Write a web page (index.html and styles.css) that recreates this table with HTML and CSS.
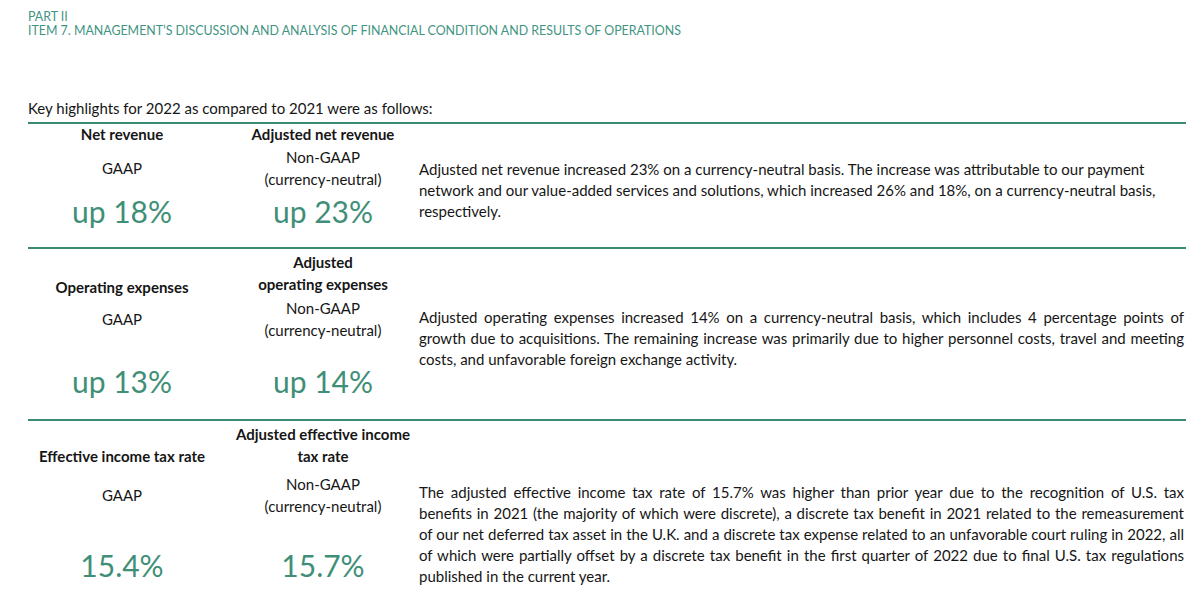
FILE: index.html
```html
<!DOCTYPE html>
<html lang="en">
<head>
<meta charset="utf-8">
<title>Key highlights</title>
<link rel="stylesheet" href="styles.css">
</head>
<body>
<main class="page">
  <header class="doc-head">
    <div class="doc-head__line">PART II</div>
    <div class="doc-head__line">ITEM 7. MANAGEMENT’S DISCUSSION AND ANALYSIS OF FINANCIAL CONDITION AND RESULTS OF OPERATIONS</div>
  </header>

  <p class="intro">Key highlights for 2022 as compared to 2021 were as follows:</p>

  <section class="hl hl--rev">
    <div class="hl__col">
      <div class="hl__title">Net revenue</div>
      <div class="hl__sub">GAAP</div>
      <div class="hl__value">up 18%</div>
    </div>
    <div class="hl__col hl__col--adj">
      <div class="hl__title">Adjusted net revenue</div>
      <div class="hl__sub">Non-GAAP<br>(currency-neutral)</div>
      <div class="hl__value">up 23%</div>
    </div>
    <p class="hl__desc hl__desc--left">Adjusted net revenue increased 23% on a currency-neutral basis. The increase was attributable to our payment network and our value-added services and solutions, which increased 26% and 18%, on a currency-neutral basis, respectively.</p>
  </section>

  <section class="hl hl--opex">
    <div class="hl__col">
      <div class="hl__title hl__title--low">Operating expenses</div>
      <div class="hl__sub">GAAP</div>
      <div class="hl__value">up 13%</div>
    </div>
    <div class="hl__col hl__col--adj">
      <div class="hl__title">Adjusted<br>operating expenses</div>
      <div class="hl__sub">Non-GAAP<br>(currency-neutral)</div>
      <div class="hl__value">up 14%</div>
    </div>
    <p class="hl__desc">Adjusted operating expenses increased 14% on a currency-neutral basis, which includes 4 percentage points of growth due to acquisitions. The remaining increase was primarily due to higher personnel costs, travel and meeting costs, and unfavorable foreign exchange activity.</p>
  </section>

  <section class="hl hl--tax">
    <div class="hl__col">
      <div class="hl__title">Effective income tax rate</div>
      <div class="hl__sub">GAAP</div>
      <div class="hl__value">15.4%</div>
    </div>
    <div class="hl__col hl__col--adj">
      <div class="hl__title">Adjusted effective income<br>tax rate</div>
      <div class="hl__sub">Non-GAAP<br>(currency-neutral)</div>
      <div class="hl__value">15.7%</div>
    </div>
    <p class="hl__desc">The adjusted effective income tax rate of 15.7% was higher than prior year due to the recognition of U.S. tax benefits in 2021 (the majority of which were discrete), a discrete tax benefit in 2021 related to the remeasurement of our net deferred tax asset in the U.K. and a discrete tax expense related to an unfavorable court ruling in 2022, all of which were partially offset by a discrete tax benefit in the first quarter of 2022 due to final U.S. tax regulations published in the current year.</p>
  </section>
</main>
</body>
</html>
```

FILE: styles.css
```css
* { box-sizing: border-box; }

body {
  margin: 0;
  background: #ffffff;
  color: #161616;
  font-family: Lato, "Liberation Sans", Arial, sans-serif;
}

.page {
  width: 1186px;
  padding-left: 28px;
}

.doc-head {
  padding-top: 10px;
  color: #3f9482;
  font-size: 12.4px;
  line-height: 13.5px;
}

.intro {
  margin: 61px 0 4px;
  font-size: 15px;
  line-height: 20px;
}

.hl {
  display: grid;
  grid-template-columns: 188px 202px 1fr;
  border-top: 2px solid #3b8a74;
}

.hl--rev  { height: 125px; --title-h: 21px; --sub-gap: 2px;  --val-gap: 3px; }
.hl--opex { height: 172px; --title-h: 46px; --sub-gap: 3px;  --val-gap: 22px; }
.hl--tax  { height: 220px; --title-h: 46px; --sub-gap: 7px;  --val-gap: 30px; }

.hl__col {
  display: flex;
  flex-direction: column;
  align-items: center;
  text-align: center;
  font-size: 15px;
  line-height: 21.5px;
}

.hl__col--adj { padding-left: 12px; }

.hl__title {
  height: var(--title-h);
  display: flex;
  flex-direction: column;
  justify-content: flex-end;
  font-weight: 700;
}

.hl__title--low {
  height: calc(var(--title-h) + 3px);
  margin-bottom: -3px;
}

.hl__sub {
  margin-top: var(--sub-gap);
  height: 43px;
  display: flex;
  align-items: center;
  justify-content: center;
}

.hl__value {
  margin-top: var(--val-gap);
  font-size: 30px;
  line-height: 36px;
  color: #3f8f78;
}

.hl__desc {
  align-self: center;
  margin: 0;
  padding: 9px 2px 0 1px;
  font-size: 15px;
  line-height: 21px;
  text-align: justify;
}

.hl__desc--left { text-align: left; }
```
